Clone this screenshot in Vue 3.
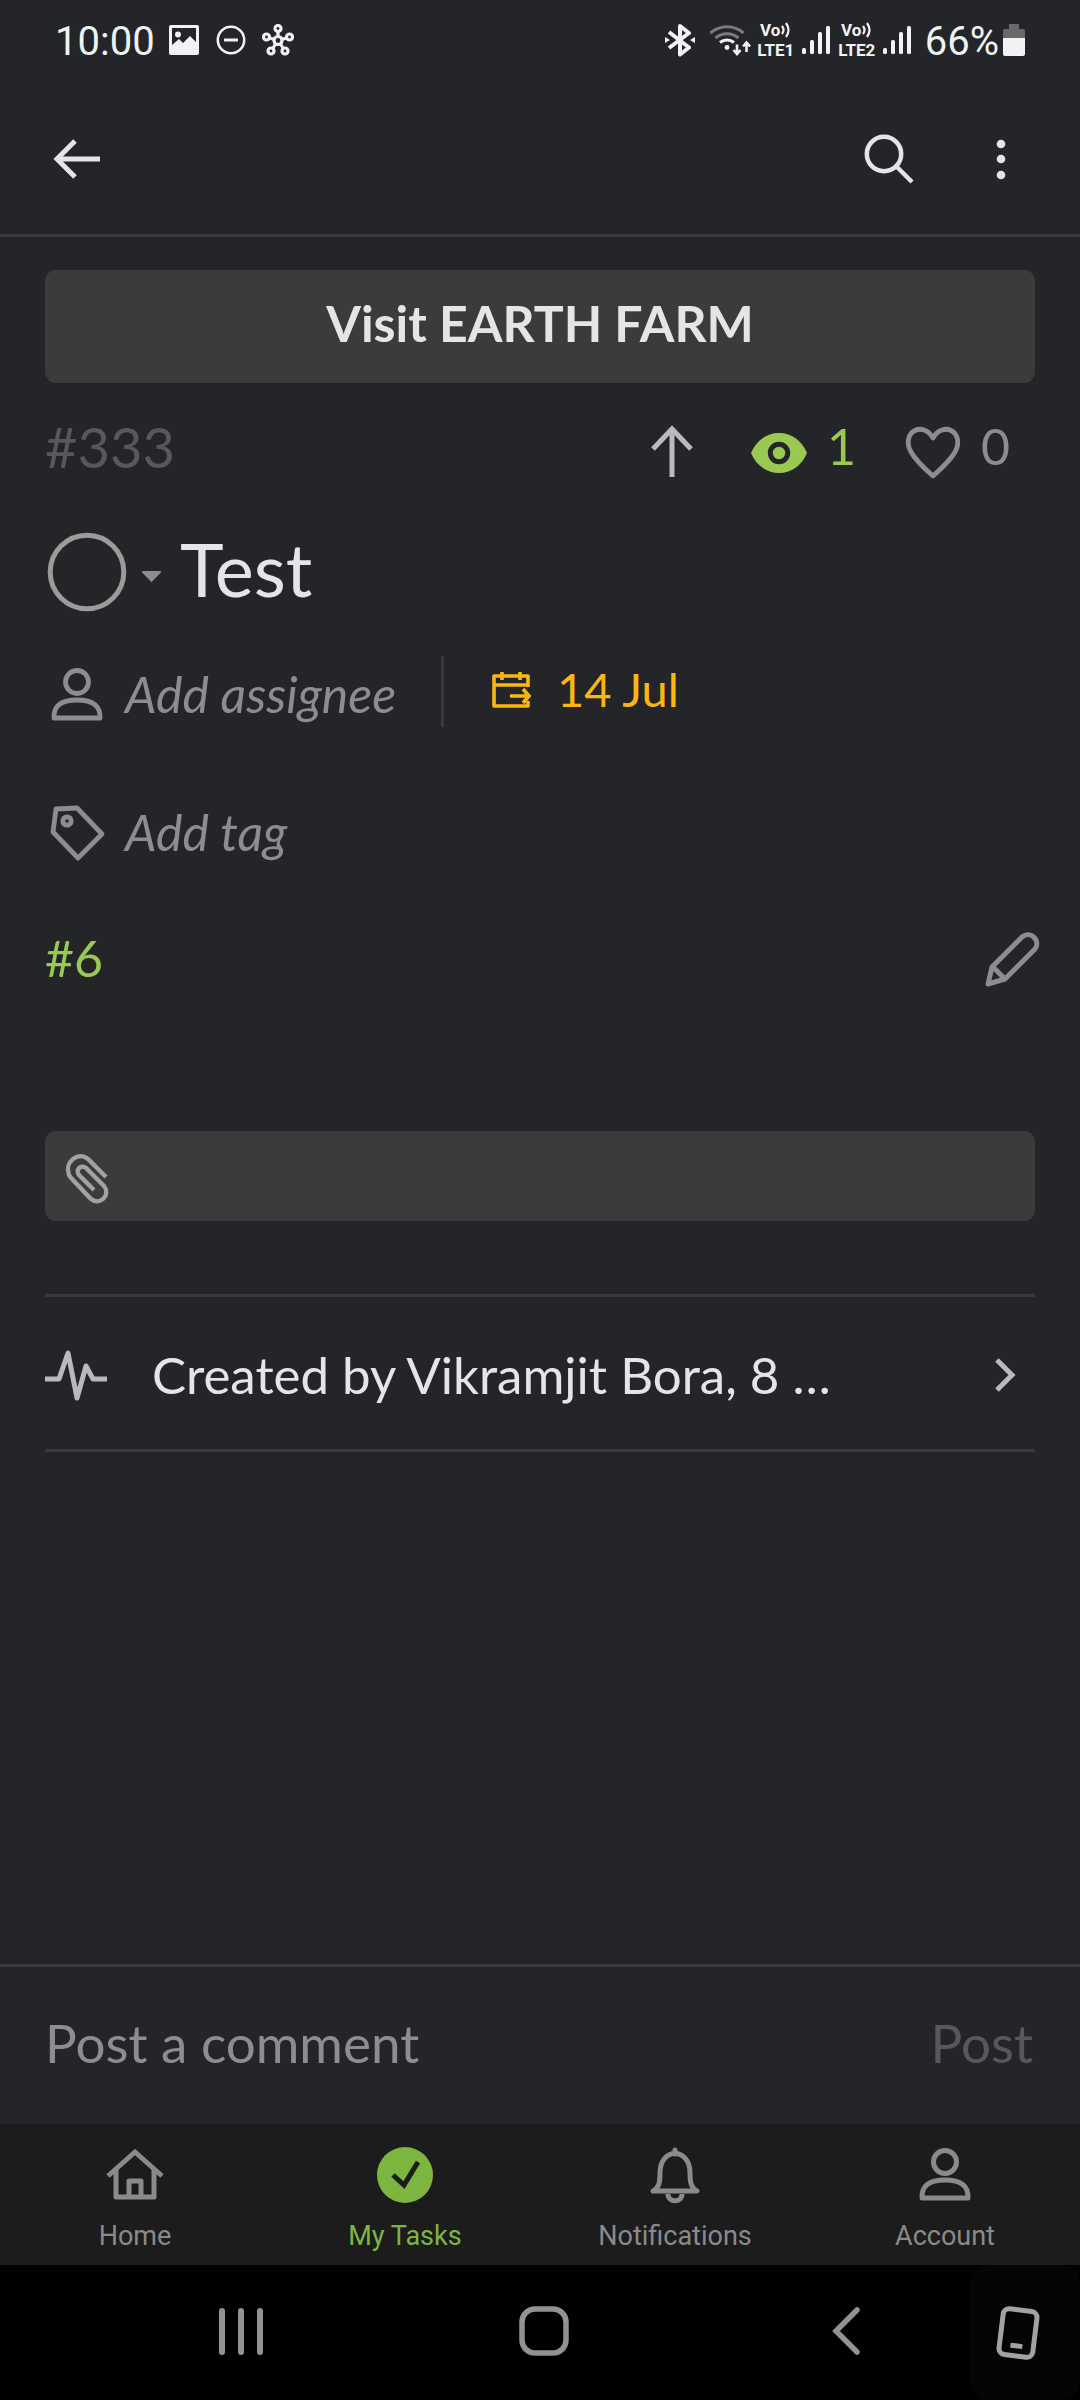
<script setup>
import { ref } from 'vue'

const comment = ref('')
const sims = [{ label: 'LTE1' }, { label: 'LTE2' }]
const tabs = [
  { label: 'Home', icon: 'home' },
  { label: 'My Tasks', icon: 'tasks' },
  { label: 'Notifications', icon: 'bell' },
  { label: 'Account', icon: 'account' },
]
const active = ref('My Tasks')
</script>

<template>
  <div class="app">
    <div class="status">
      <span class="clock">10:00</span>
      <svg class="s-photo" width="32" height="32" viewBox="0 0 32 32">
        <path fill="currentColor" fill-rule="evenodd" d="M3 1h26a2 2 0 0 1 2 2v26a2 2 0 0 1-2 2H3a2 2 0 0 1-2-2V3a2 2 0 0 1 2-2zM4 4v17l7-6 4 4 7-7 6 6V4zM10 7.500a3 3 0 1 1 0 6 3 3 0 0 1 0-6z" />
      </svg>
      <svg class="s-dnd" width="32" height="32" viewBox="0 0 32 32" fill="none" stroke="currentColor" stroke-width="2.600">
        <circle cx="16" cy="16" r="13.200" /><path d="M9 16h14" stroke-width="3" />
      </svg>
      <svg class="s-hub" width="32" height="32" viewBox="0 0 32 32" fill="none" stroke="currentColor" stroke-width="3.200">
        <circle cx="16" cy="16.500" r="4" /><circle cx="16" cy="4.500" r="3" /><circle cx="4.500" cy="13" r="3" />
        <circle cx="27.500" cy="13" r="3" /><circle cx="9" cy="27" r="3" /><circle cx="23" cy="27" r="3" />
        <path d="M16 8v4.500M7.500 14l4.500 1.300M24.500 14 20 15.300M11 24l2.500-4M21 24l-2.500-4" />
      </svg>
      <span class="grow"></span>
      <svg class="s-bt" width="32" height="34" viewBox="0 0 32 34" fill="none" stroke="currentColor" stroke-width="4">
        <path d="M5 9l20 15.500-9 7V3l9 7L5 25" stroke-linejoin="round" />
        <path d="M1 14l5 3-5 3zM31 14l-5 3 5 3z" fill="currentColor" stroke="none" />
      </svg>
      <svg class="s-wifi" width="42" height="34" viewBox="0 0 42 34" fill="none" stroke="currentColor" stroke-width="3">
        <path d="M1.500 10a25 25 0 0 1 33 0M6.500 15a18 18 0 0 1 23 0" opacity=".42" />
        <path d="M11 19.500a11 11 0 0 1 14 0" />
        <circle cx="18" cy="24.500" r="2.400" fill="currentColor" stroke="none" />
        <path d="M28 21.500v9M24.500 27l3.500 4 3.500-4M37.500 29v-9M34 23.500l3.500-4 3.500 4" stroke-width="2.600" />
      </svg>
      <template v-for="sim in sims" :key="sim.label">
        <span class="volte">
          <span class="vo">Vo<svg width="10" height="16" viewBox="0 0 10 16" fill="none" stroke="currentColor" stroke-width="2.200">
              <path d="M1 4q3 4 0 8M5 1q5 7 0 14" />
            </svg>
          </span>
          <span>{{ sim.label }}</span>
        </span>
        <svg class="s-signal" width="28" height="30" viewBox="0 0 28 30" fill="currentColor">
          <rect y="23" width="4" height="6" rx="1.500" /><rect x="8" y="15" width="4" height="14" rx="1.500" />
          <rect x="16" y="7" width="4" height="22" rx="1.500" /><rect x="24" y="1" width="4" height="28" rx="1.500" />
        </svg>
      </template>
      <span class="percent">66%</span>
      <svg class="s-batt" width="22" height="32" viewBox="0 0 22 32">
        <path d="M6 0h10v5h4a2 2 0 0 1 2 2v7H0V7a2 2 0 0 1 2-2h4z" fill="#68696b" />
        <path d="M0 14h22v16a2 2 0 0 1-2 2H2a2 2 0 0 1-2-2z" fill="currentColor" />
      </svg>
    </div>

    <header class="bar">
      <button type="button" aria-label="Back">
        <svg width="54" height="54" viewBox="0 0 54 54" fill="none" stroke="#e4e5e7" stroke-width="5">
          <path d="M50 27H7M25 9 7 27l18 18" />
        </svg>
      </button>
      <span class="grow"></span>
      <button type="button" aria-label="Search">
        <svg width="54" height="54" viewBox="0 0 54 54" fill="none" stroke="#e4e5e7" stroke-width="4.500">
          <circle cx="23" cy="22" r="17.200" /><path d="M35 34l16 16" />
        </svg>
      </button>
      <button type="button" class="more" aria-label="More options">
        <svg width="54" height="54" viewBox="0 0 54 54" fill="#e4e5e7">
          <circle cx="27" cy="12" r="4.300" /><circle cx="27" cy="27" r="4.300" /><circle cx="27" cy="43" r="4.300" />
        </svg>
      </button>
    </header>

    <main>
      <button type="button" class="visit">Visit EARTH FARM</button>

      <div class="meta">
        <span class="number">#333</span>
        <span class="grow"></span>
        <button type="button" aria-label="Move to top">
          <svg width="60" height="56" viewBox="0 0 60 56" fill="none" stroke="#b9babd" stroke-width="5">
            <path d="M30 53V6M11 25 30 5l19 20" />
          </svg>
        </button>
        <button type="button" class="watch">
          <svg width="60" height="56" viewBox="0 0 60 56" fill="none">
            <path fill="#9ac953" d="M2 29C7 17 17 9 30 9s23 8 28 20c-5 12-15 20-28 20S7 41 2 29z" />
            <circle cx="30" cy="29" r="8.700" stroke="#242529" stroke-width="5" />
          </svg>
          <span>1</span>
        </button>
        <button type="button" class="like">
          <svg width="60" height="56" viewBox="0 0 60 56" fill="none" stroke="#8c8d91" stroke-width="4.800" stroke-linejoin="round">
            <path d="M30 14C25 5 17 4 12 6.500 5 10 3 19 8 28c5 9 13 16 22 24 9-8 17-15 22-24 5-9 3-18-4-21.500C43 4 35 5 30 14z" />
          </svg>
          <span>0</span>
        </button>
      </div>

      <div class="title">
        <button type="button" aria-label="Task status">
          <svg width="120" height="88" viewBox="0 0 120 88">
            <circle cx="42" cy="47" r="36.800" fill="none" stroke="#9a9c99" stroke-width="5" />
            <path d="M98 46h17a1 1 0 0 1 1 1.500l-8.500 8.500a1 1 0 0 1-2 0L97 47.500a1 1 0 0 1 1-1.500z" fill="#8c8d8f" />
          </svg>
        </button>
        <h1>Test</h1>
      </div>

      <div class="people">
        <button type="button" class="add">
          <svg width="60" height="60" viewBox="0 0 60 60" fill="none" stroke="#8c8d91" stroke-width="4.800" stroke-linejoin="round">
            <circle cx="30" cy="18" r="11.500" /><path d="M7 54q-1-18 23-18t23 18z" />
          </svg>
          Add assignee
        </button>
        <button type="button" class="date">
          <svg width="42" height="42" viewBox="0 0 42 42" fill="none" stroke="currentColor" stroke-width="3.600">
            <path d="M38 19V8H4v30h34v-5M4 17h34M12 4v8M30 4v8" stroke-linejoin="round" />
            <path d="M20 28h18M33 21l6 7-6 7" />
          </svg>
          14 Jul
        </button>
      </div>

      <button type="button" class="add tag">
        <svg width="60" height="60" viewBox="0 0 60 60" fill="none" stroke="#8c8d91" stroke-width="4.800" stroke-linejoin="round">
          <path d="M9 7l21-1 25 26-24 24L6 30z" /><circle cx="20" cy="19" r="4.200" />
        </svg>
        Add tag
      </button>

      <div class="desc">
        <a href="#">#6</a>
        <button type="button" aria-label="Edit description">
          <svg width="60" height="60" viewBox="0 0 60 60" fill="none" stroke="#8c8d91" stroke-width="5" stroke-linejoin="round">
            <path d="M6 56l4-17L40 9c9-7 19 4 13 12L23 51zM11 39l12 12" />
          </svg>
        </button>
      </div>

      <button type="button" class="attach" aria-label="Attach a file">
        <svg width="48" height="54" viewBox="0 0 48 54" fill="none" stroke="#a1a3a1" stroke-width="4.400">
          <path d="M42 25 24 7C14-1 0 10 5 23q1 2 3 4l19 20c9 7 20-4 13-13L22 16c-5-4-11 2-7 7l15 15" />
        </svg>
      </button>

      <button type="button" class="activity">
        <svg width="62" height="54" viewBox="0 0 62 54" fill="none" stroke="#b9babd" stroke-width="5" stroke-linejoin="round">
          <path d="M0 31h14l9-26 9 45 9-32 7 13h14" />
        </svg>
        <span class="event">Created by Vikramjit Bora, 8 …</span>
        <svg width="40" height="40" viewBox="0 0 40 40" fill="none" stroke="#b9babd" stroke-width="5">
          <path d="M12 5l15 15-15 15" />
        </svg>
      </button>
    </main>

    <form class="composer" @submit.prevent>
      <input v-model="comment" type="text" placeholder="Post a comment" aria-label="Post a comment" />
      <button type="submit" :disabled="!comment">Post</button>
    </form>

    <nav class="tabs">
      <button v-for="t in tabs" :key="t.label" type="button" :class="{ on: active === t.label }" @click="active = t.label">
        <svg width="60" height="60" viewBox="0 0 60 60" fill="none" stroke="currentColor" stroke-width="5" stroke-linejoin="round">
          <template v-if="t.icon === 'home'">
            <path d="M3 32 30 8l27 24" stroke-linejoin="miter" /><path d="M11 25v28h38V25M24 53V37h12v16" />
          </template>
          <template v-else-if="t.icon === 'tasks'">
            <circle cx="30" cy="31" r="28" fill="currentColor" stroke="none" />
            <path d="M18 31l11 10 14-23" stroke="#1c1c1c" stroke-linejoin="miter" />
          </template>
          <template v-else-if="t.icon === 'bell'">
            <path d="M30 6v4M8 47c6-3 7-9 7-18 0-26 30-26 30 0 0 9 1 15 7 18z" stroke-linecap="round" />
            <path d="M23 50c0 9 14 9 14 0" />
          </template>
          <template v-else>
            <circle cx="30" cy="18" r="11.500" /><path d="M7 54q-1-18 23-18t23 18z" />
          </template>
        </svg>
        {{ t.label }}
      </button>
    </nav>

    <div class="system">
      <div class="keys">
        <button type="button" aria-label="Recent apps">
          <svg width="54" height="54" viewBox="0 0 54 54" fill="#929292">
            <rect x="5" y="4" width="6" height="47" rx="3" /><rect x="24" y="4" width="6" height="47" rx="3" /><rect x="43" y="4" width="6" height="47" rx="3" />
          </svg>
        </button>
        <button type="button" aria-label="Home screen">
          <svg width="54" height="54" viewBox="0 0 54 54" fill="none" stroke="#929292" stroke-width="5.500">
            <rect x="5" y="5" width="44" height="44" rx="13" />
          </svg>
        </button>
        <button type="button" aria-label="System back">
          <svg width="54" height="54" viewBox="0 0 54 54" fill="none" stroke="#929292" stroke-width="5.500" stroke-linecap="round">
            <path d="M36 6 15 27l21 21" />
          </svg>
        </button>
      </div>
      <button type="button" class="rotate" aria-label="Rotate">
        <svg width="54" height="54" viewBox="0 0 54 54" fill="none" stroke="#a2a2a2" stroke-width="5">
          <g transform="rotate(7 27 27)"><rect x="10" y="4" width="34" height="46" rx="6" /><path d="M21 40h12" /></g>
        </svg>
      </button>
    </div>
  </div>
</template>

<style>
body {
  background: #242529;
}
</style>

<style scoped>
.app {
  min-height: 100vh;
  display: flex;
  flex-direction: column;
  background: #242529;
  font-family: Lato, "Liberation Sans", sans-serif;
  font-size: 50px;
  line-height: 60px;
}
button {
  display: flex;
  align-items: center;
  padding: 0;
  border: 0;
  background: none;
  color: inherit;
  font: inherit;
  text-align: left;
}
svg {
  display: block;
  flex: none;
}
.grow {
  flex: 1;
}

.status {
  display: flex;
  align-items: center;
  height: 80px;
  padding: 0 55px;
  color: #f1f2f3;
  font-family: Roboto, sans-serif;
  font-size: 40px;
  line-height: 48px;
}
.clock,
.percent {
  padding-top: 4px;
}
.s-photo {
  margin-left: 13px;
}
.s-dnd,
.s-hub {
  margin-left: 15px;
}
.s-wifi {
  margin: 0 4px 0 13px;
}
.volte {
  display: flex;
  flex-direction: column;
  align-items: center;
  width: 42px;
  font-size: 17px;
  font-weight: 700;
  line-height: 20px;
}
.vo {
  display: flex;
  align-items: center;
  gap: 1px;
}
.s-signal {
  margin: 0 6px 0 5px;
}
.percent {
  margin: 0 4px 0 8px;
}

.bar {
  display: flex;
  align-items: center;
  height: 151px;
  padding: 3px 52px 0 50px;
  border-bottom: 3px solid #38393d;
}
.more {
  margin-left: 59px;
}

main {
  flex: 1;
  display: flex;
  flex-direction: column;
  padding: 33px 45px;
  color: #e4e5e7;
}
.visit {
  justify-content: center;
  padding: 23px 0 30px;
  border-radius: 11px;
  background: #3a3b3a;
  font-weight: 700;
}
.meta {
  display: flex;
  align-items: center;
  margin: 29px 25px 0 0;
}
.meta svg {
  margin-top: 12px;
}
.number {
  color: #57585c;
  font-size: 56px;
  line-height: 67px;
}
.watch {
  margin-left: 47px;
  gap: 18px;
  color: #9ac953;
}
.like {
  margin-left: 47px;
  gap: 18px;
  color: #8c8d91;
}
.title {
  display: flex;
  align-items: center;
  margin-top: 45px;
  gap: 15px;
}
h1 {
  margin: 0;
  font-size: 74px;
  font-weight: 400;
  line-height: 88px;
}
.people {
  display: flex;
  align-items: center;
  margin-top: 43px;
}
.add {
  padding-left: 2px;
  gap: 18px;
  color: #8c8d91;
  font-style: italic;
}
.people .add {
  padding-top: 5px;
}
.date {
  min-height: 71px;
  margin-left: 45px;
  padding: 0 0 6px 46px;
  gap: 25px;
  border-left: 3px solid #38393d;
  color: #fab80f;
  font-size: 47px;
}
.tag {
  margin-top: 75px;
}
.desc {
  display: flex;
  justify-content: space-between;
  margin: 66px -7px 0 0;
}
a {
  color: #9ac953;
  text-decoration: none;
}
.attach {
  height: 90px;
  margin-top: 143px;
  padding: 6px 19px 0;
  border-radius: 11px;
  background: #3a3b3a;
}
.activity {
  margin-top: 73px;
  padding: 48px 10px 44px 0;
  border: solid #38393d;
  border-width: 3px 0;
}
.event {
  flex: 1;
  margin-left: 45px;
  font-size: 51px;
}

.composer {
  display: flex;
  align-items: center;
  gap: 40px;
  padding: 44px 47px 49px 45px;
  border-top: 3px solid #38393d;
  font-size: 53px;
  line-height: 64px;
}
.composer input {
  flex: 1;
  min-width: 0;
  height: 64px;
  padding: 0;
  border: 0;
  outline: 0;
  background: none;
  color: #e4e5e7;
  font: inherit;
}
.composer input::placeholder {
  color: #8c8d91;
  opacity: 1;
}
.composer button {
  color: #57585c;
}

.tabs {
  display: flex;
  background: #1c1c1c;
  color: #8a8a8a;
  font-family: Roboto, sans-serif;
  font-size: 27px;
  line-height: 34px;
}
.tabs button {
  flex: 1;
  flex-direction: column;
  gap: 15px;
  padding: 20px 0 12px;
}
.tabs .on {
  color: #7cb63e;
}

.system {
  display: flex;
  height: 135px;
  background: #000;
}
.keys {
  flex: 1;
  display: flex;
  gap: 60px;
  padding-left: 11%;
}
.keys button {
  flex: 1;
  justify-content: center;
  padding-bottom: 3px;
}
.rotate {
  width: 110px;
  justify-content: center;
  padding-right: 14px;
  border-radius: 20px;
  background: #050505;
}
</style>
